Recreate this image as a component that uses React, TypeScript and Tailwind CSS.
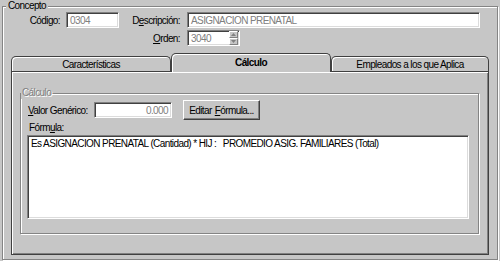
import React from 'react';

const font = "font-['Liberation_Sans',Arial,sans-serif]";
const sunken =
  'border border-t-[#808080] border-l-[#808080] border-b-white border-r-white shadow-[inset_1px_1px_0_#404040,inset_-1px_-1px_0_#dcdcdc] bg-white';
const etched = 'border border-[#848484] shadow-[inset_1px_1px_0_#fff,1px_1px_0_#fff]';

function Spinner() {
  return (
    <div className="flex flex-col w-[9px] h-[14px] ml-auto">
      <div className="flex-1 flex items-center justify-center bg-[#c6c6c6] border border-t-white border-l-white border-r-[#808080] border-b-[#808080]">
        <svg width="5" height="3" viewBox="0 0 5 3"><path d="M2.5 0 L5 3 L0 3 Z" fill="#808080" /></svg>
      </div>
      <div className="flex-1 flex items-center justify-center bg-[#c6c6c6] border border-t-white border-l-white border-r-[#808080] border-b-[#808080]">
        <svg width="5" height="3" viewBox="0 0 5 3"><path d="M0 0 L5 0 L2.5 3 Z" fill="#808080" /></svg>
      </div>
    </div>
  );
}

export default function App() {
  return (
    <div className={`w-[500px] h-[261px] bg-[#c6c6c6] text-black text-[10px] tracking-[-0.6px] leading-[13px] whitespace-nowrap ${font} overflow-hidden px-[2px]`}>
      <fieldset className={`h-[260px] w-[496px] ${etched} m-0 p-0 min-w-0`}>
        <legend className="ml-[3px] px-[2px] leading-[12px] bg-[#c6c6c6]">Concepto</legend>

        {/* Código / Descripción */}
        <div className="flex items-center h-[16px]">
          <div className="w-[57px] text-right">Código:</div>
          <div className={`ml-[6px] w-[53px] h-[16px] ${sunken} text-[#808080] pl-[3px] flex items-center`}>0304</div>
          <div className="w-[61px] text-right">
            D<span className="underline">e</span>scripción:
          </div>
          <div className={`ml-[7px] w-[293px] h-[16px] ${sunken} text-[#808080] pl-[3px] flex items-center`}>
            ASIGNACION PRENATAL
          </div>
        </div>

        {/* Orden */}
        <div className="flex items-center h-[16px] mt-[2px]">
          <div className="w-[177px] text-right">
            <span className="underline">O</span>rden:
          </div>
          <div className={`ml-[7px] w-[53px] h-[16px] ${sunken} text-[#808080] pl-[3px] pr-[1px] flex items-center`}>
            3040
            <Spinner />
          </div>
        </div>

        {/* Tabs */}
        <div className="ml-[8px] mt-[7px] w-[478px]">
          <div className="flex items-end h-[18px]">
            <div className="w-[160px] h-[15px] border border-b-0 border-[#404040] rounded-t-[5px] shadow-[inset_1px_1px_0_#fff] flex items-center justify-center">
              Características
            </div>
            <div className="relative z-10 w-[160px] h-[19px] -mb-px bg-[#c6c6c6] border border-b-0 border-[#404040] rounded-t-[5px] shadow-[inset_1px_1px_0_#fff] flex items-center justify-center font-bold pb-[2px]">
              Cálculo
            </div>
            <div className="w-[158px] h-[15px] border border-b-0 border-[#404040] rounded-t-[5px] shadow-[inset_1px_1px_0_#fff] flex items-center justify-center">
              Empleados a los que Aplica
            </div>
          </div>

          <div className="h-[184px] border border-[#404040] shadow-[inset_1px_1px_0_#fff,inset_-1px_-1px_0_#808080] pt-[15px]">
            <fieldset className={`ml-[8px] w-[459px] h-[147px] ${etched} m-0 p-0 min-w-0`}>
              <legend className="ml-0 px-[1px] leading-[12px] bg-[#c6c6c6] text-[#808080] [text-shadow:1px_1px_0_#fff]">
                Cálculo
              </legend>

              <div className="flex items-center h-[20px] mt-[1px]">
                <div className="w-[73px] pl-[7px]">
                  <span className="underline">V</span>alor Genérico:
                </div>
                <div className={`w-[78px] h-[16px] ${sunken} text-[#808080] pr-[3px] flex items-center justify-end`}>0.000</div>
                <div className="ml-[11px] w-[77px] h-[20px] bg-[#c6c6c6] border border-t-white border-l-white border-r-[#404040] border-b-[#404040] shadow-[inset_-1px_-1px_0_#808080] flex items-center justify-center">
                  Editar <span className="underline ml-[3px]">F</span>órmula...
                </div>
              </div>

              <div className="mt-[1px] pl-[8px] leading-[13px]">
                Fórm<span className="underline">u</span>la:
              </div>
              <div className={`mt-[1px] ml-[6px] w-[442px] h-[84px] ${sunken} pl-[3px] pt-[1px] whitespace-pre`}>
                {'Es ASIGNACION PRENATAL (Cantidad) * HIJ :   PROMEDIO ASIG. FAMILIARES (Total)'}
              </div>
            </fieldset>
          </div>
        </div>
      </fieldset>
    </div>
  );
}
